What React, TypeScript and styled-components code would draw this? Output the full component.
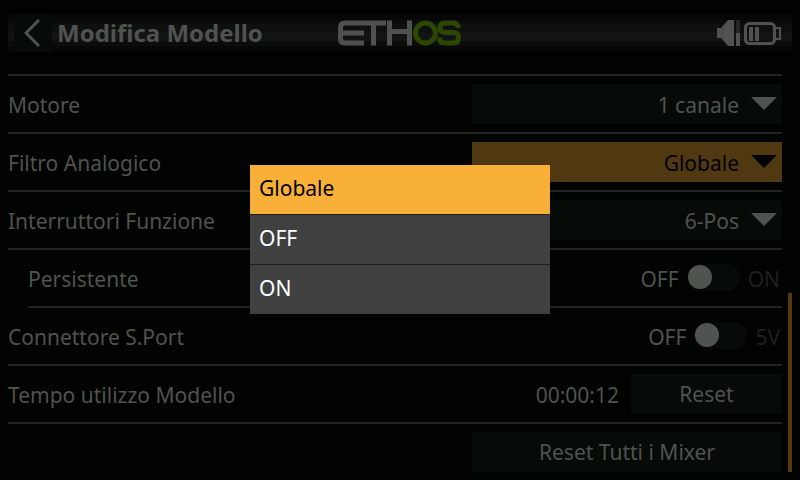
import React, { useState } from "react";
import styled, { createGlobalStyle } from "styled-components";

const text = "#4f534f";
const panel = "#070b08";
const line = "#232122";

const GlobalStyle = createGlobalStyle`
  *, *::before, *::after { box-sizing: border-box; }
  body {
    margin: 0;
    background: #000300;
    color: ${text};
    font: 21px/40px "Noto Sans", "Open Sans", sans-serif;
  }
  button, select { font: inherit; color: inherit; border: 0; border-radius: 0; }
`;

const Page = styled.div`
  min-height: 100vh;
  display: flex;
  flex-direction: column;
  padding: 10px 8px 8px;
`;

const Header = styled.header`
  display: grid;
  grid-template-columns: 1fr auto 1fr;
  align-items: center;
  height: 46px;
  margin-bottom: 18px;
  background: linear-gradient(
    #000 0 5px, #060706 5px 10px, #0a0c0a 10px 14px, #0e100e 14px 22px,
    #111412 22px 31px, #0b0d0b 31px 36px, #060706 36px 41px, #000 41px
  );
`;

const Heading = styled.div`
  display: flex;
  align-items: center;
  gap: 5px;
  padding-left: 6px;
`;

const BackButton = styled.button`
  display: grid;
  place-items: center;
  width: 38px;
  height: 38px;
  padding: 0;
  background: ${panel};
`;

const Title = styled.h1`
  margin: 0;
  font-size: 24px;
  line-height: 38px;
  font-weight: 700;
  white-space: nowrap;
`;

const Status = styled.div`
  display: flex;
  justify-content: flex-end;
  align-items: center;
  padding-right: 10px;
`;

const Body = styled.main`
  flex: 1;
  display: flex;
  gap: 6px;
`;

const Settings = styled.div`
  flex: 1;
  border-top: 2px solid ${line};
`;

const Row = styled.div<{ $indent?: boolean }>`
  display: flex;
  align-items: center;
  justify-content: space-between;
  padding: 8px 0;
  margin-left: ${(p) => (p.$indent ? 20 : 0)}px;
  border-bottom: 2px solid ${line};
  &:last-child { border-bottom: 0; padding-bottom: 0; justify-content: flex-end; }
`;

const Label = styled.label`
  padding-top: 2px;
  line-height: 38px;
  white-space: nowrap;
`;

const SelectBox = styled.div<{ $active?: boolean }>`
  display: grid;
  align-items: center;
  width: 310px;
  height: 40px;
  color: ${(p) => (p.$active ? "#000" : text)};
  background: ${(p) => (p.$active ? "#503811" : panel)};
  & > * { grid-area: 1 / 1; }
  svg { justify-self: end; margin-right: 4px; pointer-events: none; }
`;

const Select = styled.select`
  appearance: none;
  width: 100%;
  height: 40px;
  padding: 1px 43px 0 8px;
  background: transparent;
  text-align-last: right;
`;

const Controls = styled.div`
  display: flex;
  align-items: center;
  gap: 8px;
`;

const SwitchControls = styled(Controls)`
  padding-right: 2px;
`;

const State = styled.span<{ $faded?: boolean }>`
  padding-top: 2px;
  line-height: 38px;
  color: ${(p) => (p.$faded ? "#1e1f1e" : text)};
`;

const Toggle = styled.input`
  appearance: none;
  display: flex;
  align-items: center;
  width: 53px;
  height: 27px;
  margin: 0 0 2px;
  padding: 0 1px;
  border-radius: 14px;
  background: ${panel};
  &::before {
    content: "";
    width: 24px;
    height: 24px;
    border-radius: 50%;
    background: #50544f;
  }
  &:checked { justify-content: flex-end; }
`;

const Elapsed = styled.output`
  padding-top: 2px;
  margin-right: 4px;
  line-height: 38px;
`;

const ActionButton = styled.button<{ $wide?: boolean }>`
  width: ${(p) => (p.$wide ? 310 : 151)}px;
  height: 40px;
  padding: 0;
  line-height: 40px;
  background: ${panel};
`;

const ScrollTrack = styled.div`
  display: flex;
  align-items: flex-end;
  width: 4px;
`;

const ScrollThumb = styled.div`
  width: 4px;
  height: 45%;
  background: #543810;
`;

const Overlay = styled.div`
  position: fixed;
  inset: 0;
  display: grid;
  place-items: center;
  padding-bottom: 1px;
`;

const Menu = styled.div`
  display: flex;
  flex-direction: column;
  gap: 1px;
  width: 300px;
  background: #1c1c1c;
`;

const MenuItem = styled.button<{ $selected: boolean }>`
  height: 49px;
  padding: 0 9px 2px;
  line-height: 47px;
  text-align: left;
  color: ${(p) => (p.$selected ? "#000" : "#fff")};
  background: ${(p) => (p.$selected ? "#f8b038" : "#404040")};
`;

const Arrow = () => (
  <svg width="28" height="14" viewBox="0 0 28 14" aria-hidden="true">
    <path d="M1 0H27L14 13Z" fill="currentColor" />
  </svg>
);

const Logo = () => (
  <svg width="124" height="26" viewBox="0 0 124 26" fill="none" strokeWidth="5" role="img" aria-label="ETHOS">
    <g stroke="#505050">
      <path d="M48 3H7Q2.500 3 2.500 7.500V18.500Q2.500 23 7 23H26M3 13H26M35.500 3V25.500M51.500 .5V25.500M71.500 .5V25.500M52 11.500H72" />
    </g>
    <g stroke="#2b4700">
      <circle cx="87.500" cy="13" r="10" />
      <path d="M120 8Q120 3 115 3H107Q102 3 102 7.750T107 12.500H115.500Q120.500 12.500 120.500 17.750T115.500 23H107Q101.500 23 101.500 17.500" />
    </g>
  </svg>
);

const StatusIcons = () => (
  <svg width="66" height="28" viewBox="0 0 66 28" fill={text} role="img" aria-label="Audio e batteria">
    <path d="M1 9H5L12 1H18V27H12L5 19H1Z" />
    <path d="M6 8V20" stroke="#434743" />
    <path d="M20 1H24V14H20Z" fill="#252725" />
    <path d="M20 14H24V27H20Z" />
    <rect x="29.500" y="4.500" width="29" height="20" rx="4" fill="none" stroke={text} strokeWidth="3" />
    <path d="M33 8H37V22H33ZM39 8H43V22H39Z" />
    <path d="M60 9H64V20H60" fill="none" stroke={text} strokeWidth="2" />
  </svg>
);

const filters = ["Globale", "OFF", "ON"];

type SelectProps = { id: string; options: string[]; value: string; active?: boolean; onChange: (v: string) => void };

const Dropdown = ({ id, options, value, active, onChange }: SelectProps) => (
  <SelectBox $active={active}>
    <Select id={id} value={value} onChange={(e) => onChange(e.target.value)}>
      {options.map((o) => <option key={o}>{o}</option>)}
    </Select>
    <Arrow />
  </SelectBox>
);

type SwitchProps = { id: string; off: string; on: string };

const Switch = ({ id, off, on }: SwitchProps) => {
  const [checked, setChecked] = useState(false);
  return (
    <SwitchControls>
      <State $faded={checked}>{off}</State>
      <Toggle id={id} type="checkbox" role="switch" checked={checked} onChange={() => setChecked(!checked)} />
      <State $faded={!checked}>{on}</State>
    </SwitchControls>
  );
};

export default function App() {
  const [engine, setEngine] = useState("1 canale");
  const [filter, setFilter] = useState("Globale");
  const [switches, setSwitches] = useState("6-Pos");
  const [open, setOpen] = useState(true);

  return (
    <Page>
      <GlobalStyle />
      <Header>
        <Heading>
          <BackButton aria-label="Indietro">
            <svg width="18" height="28" viewBox="0 0 18 28" fill="none" stroke={text} strokeWidth="3">
              <path d="M15 1L2 14L15 27" />
            </svg>
          </BackButton>
          <Title>Modifica Modello</Title>
        </Heading>
        <Logo />
        <Status><StatusIcons /></Status>
      </Header>
      <Body>
        <Settings>
          <Row>
            <Label htmlFor="engine">Motore</Label>
            <Dropdown id="engine" options={["1 canale", "2 canali"]} value={engine} onChange={setEngine} />
          </Row>
          <Row>
            <Label htmlFor="filter">Filtro Analogico</Label>
            <Dropdown id="filter" options={filters} value={filter} active onChange={setFilter} />
          </Row>
          <Row>
            <Label htmlFor="switches">Interruttori Funzione</Label>
            <Dropdown id="switches" options={["6-Pos", "OFF"]} value={switches} onChange={setSwitches} />
          </Row>
          <Row $indent>
            <Label htmlFor="persistent">Persistente</Label>
            <Switch id="persistent" off="OFF" on="ON" />
          </Row>
          <Row>
            <Label htmlFor="sport">Connettore S.Port</Label>
            <Switch id="sport" off="OFF" on="5V" />
          </Row>
          <Row>
            <Label htmlFor="elapsed">Tempo utilizzo Modello</Label>
            <Controls>
              <Elapsed id="elapsed">00:00:12</Elapsed>
              <ActionButton>Reset</ActionButton>
            </Controls>
          </Row>
          <Row>
            <ActionButton $wide>Reset Tutti i Mixer</ActionButton>
          </Row>
        </Settings>
        <ScrollTrack><ScrollThumb /></ScrollTrack>
      </Body>
      {open && (
        <Overlay>
          <Menu role="listbox" aria-label="Filtro Analogico">
            {filters.map((f) => (
              <MenuItem
                key={f}
                role="option"
                aria-selected={f === filter}
                $selected={f === filter}
                onClick={() => { setFilter(f); setOpen(false); }}
              >
                {f}
              </MenuItem>
            ))}
          </Menu>
        </Overlay>
      )}
    </Page>
  );
}
